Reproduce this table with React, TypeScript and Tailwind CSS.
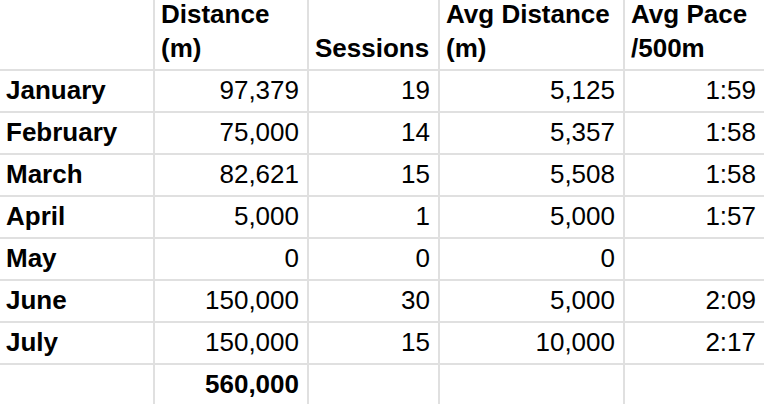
const header = [
  ["", ""],
  ["Distance", "(m)"],
  ["", "Sessions"],
  ["Avg Distance", "(m)"],
  ["Avg Pace", "/500m"],
];

const rows = [
  ["January", "97,379", "19", "5,125", "1:59"],
  ["February", "75,000", "14", "5,357", "1:58"],
  ["March", "82,621", "15", "5,508", "1:58"],
  ["April", "5,000", "1", "5,000", "1:57"],
  ["May", "0", "0", "0", ""],
  ["June", "150,000", "30", "5,000", "2:09"],
  ["July", "150,000", "15", "10,000", "2:17"],
];

export default function App() {
  return (
    <div
      className="w-[764px] h-[404px] overflow-hidden bg-white text-black text-[26px] leading-[34px]"
      style={{ fontFamily: '"Liberation Sans", Arial, sans-serif' }}
    >
      <div className="grid grid-cols-[153px_152px_129px_183px_139px] grid-rows-[69px_repeat(7,40px)_39px] gap-[2px] bg-[#e0e0e0]">
        {header.map(([a, b], i) => (
          <div key={i} className="bg-white flex flex-col justify-end pl-[6px] pb-[4px] font-bold whitespace-nowrap">
            {a && <span>{a}</span>}
            <span>{b || "\u00a0"}</span>
          </div>
        ))}
        {rows.map((row) =>
          row.map((cell, j) => (
            <div
              key={row[0] + j}
              className={
                j === 0
                  ? "bg-white flex items-end pl-[6px] pb-[4px] font-bold"
                  : "bg-white flex items-end justify-end pr-[8px] pb-[4px]"
              }
            >
              {cell}
            </div>
          ))
        )}
        <div className="bg-white" />
        <div className="bg-white flex items-end justify-end pr-[8px] pb-[3px] font-bold">560,000</div>
        <div className="bg-white" />
        <div className="bg-white" />
        <div className="bg-white" />
      </div>
    </div>
  );
}
